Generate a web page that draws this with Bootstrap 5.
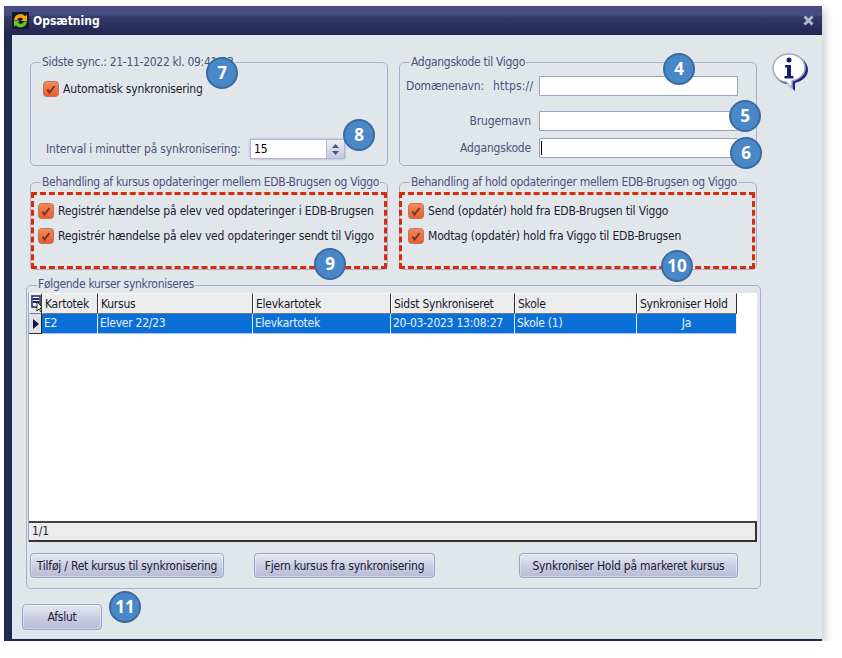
<!DOCTYPE html>
<html lang="da">
<head>
<meta charset="utf-8">
<title>Opsætning</title>
<link href="https://cdn.jsdelivr.net/npm/bootstrap@5.3.0/dist/css/bootstrap.min.css" rel="stylesheet">
<style>
body{background:#fff;font-family:"DejaVu Sans Condensed","DejaVu Sans",sans-serif;font-size:12px;color:#22253a;padding:6px 0 0 4px;overflow:hidden}
.dlg{position:relative;width:818px;height:635px;background:#e1e6ea;border-left:8px solid #22294f;border-bottom:2px solid #1f2550;box-shadow:4px 4px 8px rgba(0,0,0,.18)}
.dlg-title{height:29px;margin-left:-8px;background:linear-gradient(#474d7e 0,#474d7e 30%,#343a68 38%,#20264f 100%);color:#fff;font-weight:700;font-size:12px;padding:0 4px 0 8px}
.dlg-body{padding:27px 0 0 18px;letter-spacing:-.17px}
.top-grid{display:grid;grid-template-columns:358px 358px;column-gap:11px}
.grp{position:relative;border:1px solid #a9aed0;border-radius:5px}
.grp-a{height:104px}
.grp-b{height:88px;margin-top:16px;padding:9px 0 0 0}
.grp-c{height:304px;width:735px;margin:15px 0 0 -4px;padding:7px 0 0 1px}
.grp-cap{position:absolute;top:-8px;left:10px;background:#e1e6ea;padding:0 1px;line-height:15px;color:#4c5180;white-space:nowrap;letter-spacing:-.3px}
.grp-c .grp-cap{top:-9px}
.dash{height:77px;border:3px dashed #d92a0a;padding:3px 0 0 4px}
.dash-r{padding-left:6px;margin-left:-1px;margin-right:1px}
.cbx{display:block;width:16px;height:16px;flex:none}
.chk-row{height:25px;color:#1d2030;white-space:nowrap}
.slate{color:#4c5180}
.fld{display:block;width:199px;height:20px;background:#fff;border:1px solid #9a9fc4;border-radius:1px;padding:0 2px;font:inherit;color:#000}
.fld-wrap{position:relative;width:199px}
.caret-bar{position:absolute;left:2px;top:3px;width:1px;height:14px;background:#000}
.spin{width:95px;height:20px;background:#fff;border:1px solid #b3b7d2;box-shadow:0 0 2px #9a9fc4}
.spin-val{padding:0 0 0 3px;color:#000;font-size:12px}
.spin-btn{width:18px;background:linear-gradient(#eceef6,#c3c7df);border-left:1px solid #b3b7d2}
.grid-box{width:729px;height:249px;background:#fff;border-left:1px solid #9a9fc4;display:flex;flex-direction:column}
.grid-wrap{flex:1 1 auto;min-height:0}
.grid-tbl{table-layout:fixed;width:708px;border-collapse:separate;border-spacing:0;margin:0;letter-spacing:-.25px}
.grid-tbl th,.grid-tbl td{padding:0 2px;height:20px;font-weight:400;white-space:nowrap;overflow:hidden;box-shadow:none;font-size:12px;line-height:18px}
.grid-tbl th{background:#ececec;color:#16182a;border-top:1px solid #f8f8f8;border-bottom:1px solid #777;border-right:1px solid #333;border-left:1px solid #fff}
.grid-tbl td{--bs-table-bg:#0a6fd6;background:#0a6fd6;color:#e9f1fb;border-bottom:1px solid #a9c6ea;border-right:1px solid #e8f0fa;height:20px}
.grid-tbl .ind{background:#dfe1ea;padding:0;border-right:1px solid #222;border-bottom:1px solid #333}
.grid-tbl .corner{padding:0;background:#e6e7ef}
.stat-bar{height:21px;background:#ececec;border-top:2px solid #444;border-bottom:2px solid #333;border-right:2px solid #333;padding:0 3px;line-height:16px;color:#1d2030}
.win-btn{background:linear-gradient(#e6e8f3,#c9cce2 55%,#b7bbd8);border:1px solid #9da2c6;border-radius:4px;color:#1d2030;font-size:12px;letter-spacing:-.22px;height:25px;padding:0;line-height:22px;box-shadow:inset 0 0 0 1px rgba(255,255,255,.35)}
.btn-a{width:194px;margin-left:2px}
.btn-b{width:181px;margin-left:30px}
.btn-c{width:219px;margin-left:84px}
.btn-x{display:block;width:80px;height:26px;margin:15px 0 0 -8px}
.pin{position:absolute;width:32px;height:32px;border-radius:50%;background:#4a87c8;border:2px solid #3a6b9c;color:#fff;font:700 17px/28px "Open Sans",sans-serif;text-align:center}
.p7{left:194px;top:51px}.p8{left:331px;top:113px}.p4{left:651px;top:47px}.p5{left:717px;top:94px}.p6{left:718px;top:131px}.p9{left:302px;top:242px}.p10{left:649px;top:244px}.p11{left:97px;top:585px}
.info-ic{position:absolute;left:759px;top:46px}
.dom-row{height:20px;margin-top:13px;margin-bottom:15px}
</style>
</head>
<body>
<svg width="0" height="0" class="d-block position-absolute"><defs>
  <linearGradient id="cbg" x1="0" y1="0" x2="0" y2="1"><stop offset="0" stop-color="#f68a5e"/><stop offset="1" stop-color="#ec5a2a"/></linearGradient>
  <symbol id="tick" viewBox="0 0 16 16"><rect x=".5" y=".5" width="15" height="15" rx="3" fill="url(#cbg)" stroke="#b7785f"/><path d="M4.500 8.500l2 3L11.500 5" fill="none" stroke="#6e3a26" stroke-width="2"/></symbol>
</defs></svg>
<div class="dlg">
  <div class="dlg-title d-flex align-items-center">
    <svg width="17" height="17" viewBox="0 0 17 17" class="me-1"><rect width="17" height="17" fill="#14182e"/><path d="M2 8a6.5 6.5 0 0 1 11-4l2-1v6h-6l2-2a3.5 3.5 0 0 0-6 1z" fill="#f2a516"/><path d="M15 9.500a6.500 6.500 0 0 1-11 4l-2 1v-6h6l-2 2a3.500 3.500 0 0 0 6-1z" fill="#63c52a"/></svg>
    <span class="flex-grow-1">Opsætning</span>
    <svg width="11" height="11" viewBox="0 0 11 11" class="me-1"><path d="M1.500 1.500l8 8M9.500 1.500l-8 8" stroke="#b4b8cb" stroke-width="3"/></svg>
  </div>
  <div class="dlg-body">
    <div class="top-grid">
      <div class="grp grp-a">
        <span class="grp-cap">Sidste sync.: 21-11-2022 kl. 09:41:23</span>
        <div class="d-flex align-items-center gap-1" style="padding:17px 0 0 12px">
          <svg class="cbx"><use href="#tick"/></svg>
          <span class="chk-row" style="height:auto">Automatisk synkronisering</span>
        </div>
        <div class="d-flex align-items-center" style="padding:41px 0 0 15px">
          <span class="slate" style="width:204px">Interval i minutter på synkronisering:</span>
          <div class="spin d-flex">
            <span class="spin-val flex-grow-1">15</span>
            <span class="spin-btn d-flex align-items-center justify-content-center">
              <svg width="9" height="13" viewBox="0 0 9 13"><path d="M4.500 1l3.500 4H1zM1 8h7l-3.500 4z" fill="#4c5180"/></svg>
            </span>
          </div>
        </div>
      </div>
      <div class="grp grp-a">
        <span class="grp-cap">Adgangskode til Viggo</span>
        <div class="d-flex align-items-center dom-row">
          <span class="slate" style="padding-left:6px;width:93px">Domænenavn:</span>
          <span class="slate" style="width:46px;letter-spacing:.2px">https://</span>
          <input class="fld" type="text" aria-label="Domænenavn">
        </div>
        <div class="d-flex align-items-center" style="height:20px;margin-bottom:7px">
          <span class="slate text-end" style="width:131px">Brugernavn</span>
          <input class="fld" style="margin-left:8px" type="text" aria-label="Brugernavn">
        </div>
        <div class="d-flex align-items-center" style="height:20px">
          <span class="slate text-end" style="width:131px">Adgangskode</span>
          <div class="fld-wrap" style="margin-left:8px"><input class="fld" type="password" aria-label="Adgangskode"><span class="caret-bar"></span></div>
        </div>
      </div>
      <div class="grp grp-b">
        <span class="grp-cap">Behandling af kursus opdateringer mellem EDB-Brugsen og Viggo</span>
        <div class="dash">
          <div class="d-flex align-items-center gap-1 chk-row">
            <svg class="cbx"><use href="#tick"/></svg>
            <span>Registrér hændelse på elev ved opdateringer i EDB-Brugsen</span>
          </div>
          <div class="d-flex align-items-center gap-1 chk-row">
            <svg class="cbx"><use href="#tick"/></svg>
            <span>Registrér hændelse på elev ved opdateringer sendt til Viggo</span>
          </div>
        </div>
      </div>
      <div class="grp grp-b">
        <span class="grp-cap">Behandling af hold opdateringer mellem EDB-Brugsen og Viggo</span>
        <div class="dash dash-r">
          <div class="d-flex align-items-center gap-1 chk-row">
            <svg class="cbx"><use href="#tick"/></svg>
            <span>Send (opdatér) hold fra EDB-Brugsen til Viggo</span>
          </div>
          <div class="d-flex align-items-center gap-1 chk-row">
            <svg class="cbx"><use href="#tick"/></svg>
            <span>Modtag (opdatér) hold fra Viggo til EDB-Brugsen</span>
          </div>
        </div>
      </div>
    </div>
    <div class="grp grp-c">
      <span class="grp-cap">Følgende kurser synkroniseres</span>
      <div class="grid-box">
        <div class="grid-wrap">
          <table class="table grid-tbl">
            <colgroup><col style="width:13px"><col style="width:56px"><col style="width:155px"><col style="width:138px"><col style="width:124px"><col style="width:122px"><col style="width:100px"></colgroup>
            <thead><tr>
              <th class="corner"><svg width="13" height="19" viewBox="0 0 13 19"><rect x="2" y="2" width="8" height="11" fill="#fff" stroke="#1b2a6b" stroke-width="1.500"/><path d="M3 5h6M3 8h6" stroke="#1b2a6b" stroke-width="2"/><path d="M7 8l0 9 2-2 2 3 1-1-2-3h3z" fill="#fff" stroke="#000" stroke-width=".8"/></svg></th>
              <th>Kartotek</th><th>Kursus</th><th>Elevkartotek</th><th>Sidst Synkroniseret</th><th>Skole</th><th>Synkroniser Hold</th>
            </tr></thead>
            <tbody><tr>
              <td class="ind"><svg width="12" height="18" viewBox="0 0 12 18"><path d="M4 4l6 5-6 5z" fill="#10163a"/></svg></td>
              <td>E2</td><td>Elever 22/23</td><td>Elevkartotek</td><td>20-03-2023 13:08:27</td><td>Skole (1)</td><td class="text-center">Ja</td>
            </tr></tbody>
          </table>
        </div>
        <div class="stat-bar">1/1</div>
      </div>
      <div class="d-flex" style="margin-top:11px">
        <button type="button" class="btn win-btn btn-a">Tilføj / Ret kursus til synkronisering</button>
        <button type="button" class="btn win-btn btn-b">Fjern kursus fra synkronisering</button>
        <button type="button" class="btn win-btn btn-c">Synkroniser Hold på markeret kursus</button>
      </div>
    </div>
    <button type="button" class="btn win-btn btn-x">Afslut</button>
  </div>
  <svg class="info-ic" width="38" height="40" viewBox="0 0 38 40"><path d="M19 3C9 3 2 9 2 17s7 14 14 14l7 7 0-8c8-2 13-7 13-13C36 9 29 3 19 3z" fill="#26248a" transform="translate(1 1)"/><path d="M18 2C9 2 2 8 2 16s7 14 13 14l6 6 0-7c8-2 13-7 13-13C34 8 27 2 18 2z" fill="#fff" stroke="#aab" stroke-width="1.500"/><circle cx="18" cy="8" r="2.500" fill="#16206e"/><path d="M14 13h6v11h2.500v2.500h-9V24H16v-8.500h-2z" fill="#16206e"/></svg>
  <span class="pin p7">7</span><span class="pin p8">8</span><span class="pin p4">4</span><span class="pin p5">5</span><span class="pin p6">6</span><span class="pin p9">9</span><span class="pin p10">10</span><span class="pin p11">11</span>
</div>
<script src="https://cdn.jsdelivr.net/npm/bootstrap@5.3.0/dist/js/bootstrap.bundle.min.js"></script>
</body>
</html>
